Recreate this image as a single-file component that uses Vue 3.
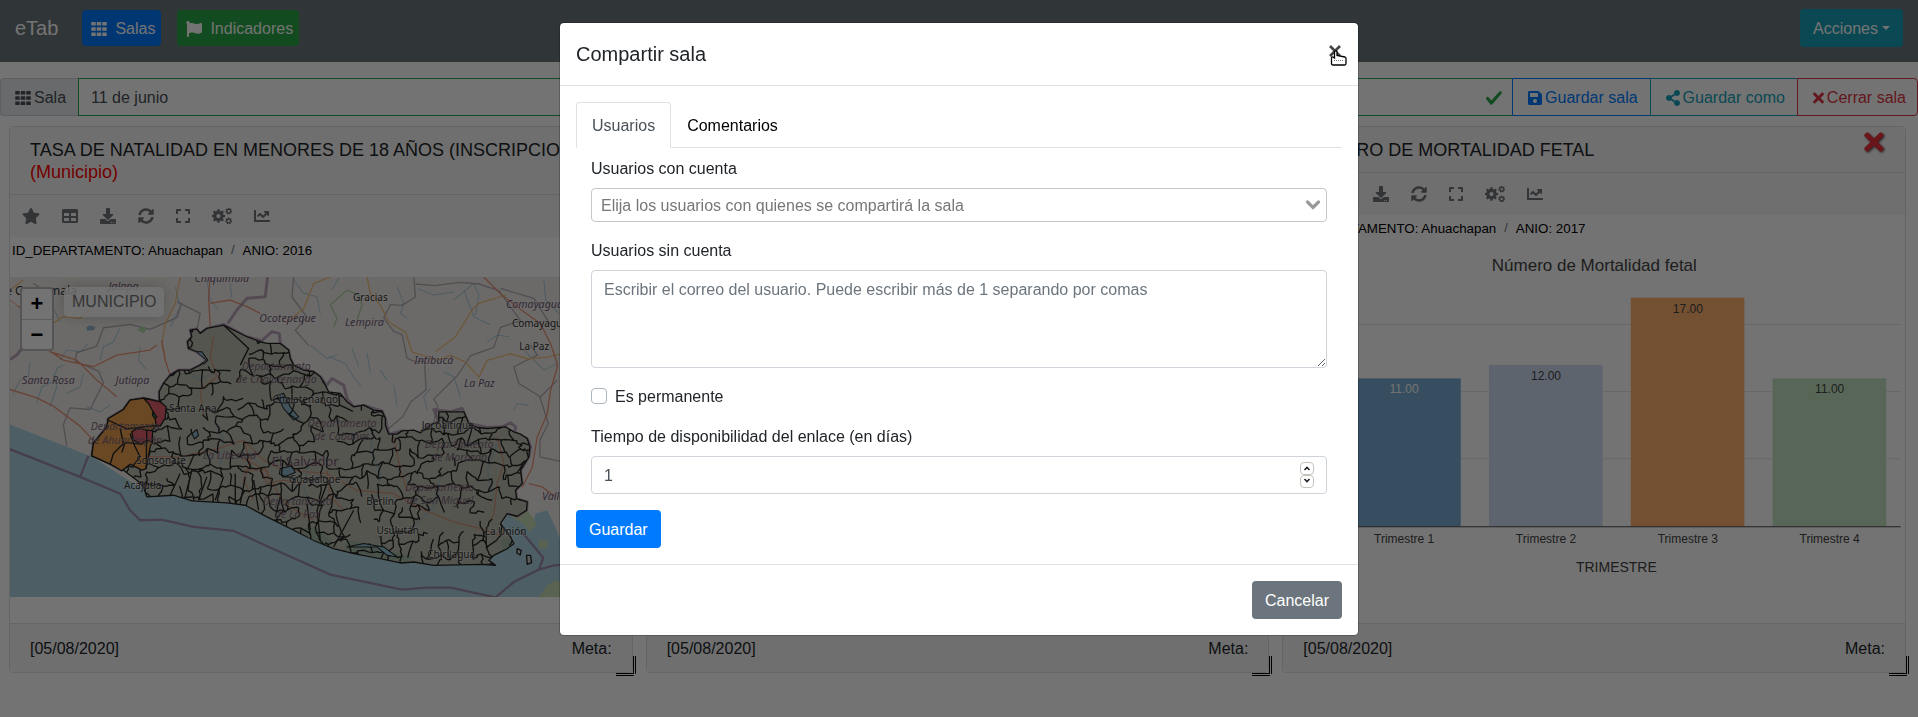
<script setup>
import { ref, h } from 'vue'

const shapes = {
  th: { w: 512, d: 'M24 32h112q16 0 16 16v80q0 16-16 16H24q-16 0-16-16V48q0-16 16-16zM200 32h112q16 0 16 16v80q0 16-16 16H200q-16 0-16-16V48q0-16 16-16zM376 32h112q16 0 16 16v80q0 16-16 16H376q-16 0-16-16V48q0-16 16-16zM24 200h112q16 0 16 16v80q0 16-16 16H24q-16 0-16-16v-80q0-16 16-16zM200 200h112q16 0 16 16v80q0 16-16 16H200q-16 0-16-16v-80q0-16 16-16zM376 200h112q16 0 16 16v80q0 16-16 16H376q-16 0-16-16v-80q0-16 16-16zM24 368h112q16 0 16 16v80q0 16-16 16H24q-16 0-16-16v-80q0-16 16-16zM200 368h112q16 0 16 16v80q0 16-16 16H200q-16 0-16-16v-80q0-16 16-16zM376 368h112q16 0 16 16v80q0 16-16 16H376q-16 0-16-16v-80q0-16 16-16z' },
  flag: { w: 512, d: 'M349.565 98.783C295.978 98.783 251.721 64 184.348 64c-24.955 0-47.309 4.384-68.045 12.013a55.947 55.947 0 0 0 3.586-23.562C118.117 24.015 94.806 1.206 66.338.048 34.345-1.254 8 24.296 8 56c0 19.026 9.497 35.825 24 45.945V488c0 13.255 10.745 24 24 24h16c13.255 0 24-10.745 24-24v-94.4c28.311-12.064 63.582-22.122 114.435-22.122 53.588 0 97.844 34.783 165.217 34.783 48.169 0 86.667-16.294 122.505-40.858C506.84 359.452 512 349.571 512 339.045v-243.1c0-23.393-24.269-38.87-45.485-29.016-34.338 15.948-76.454 31.854-116.95 31.854z' },
  save: { w: 448, d: 'M433.941 129.941l-83.882-83.882A48 48 0 0 0 316.118 32H48C21.49 32 0 53.49 0 80v352c0 26.51 21.49 48 48 48h352c26.51 0 48-21.49 48-48V163.882a48 48 0 0 0-14.059-33.941zM224 416c-35.346 0-64-28.654-64-64 0-35.346 28.654-64 64-64s64 28.654 64 64c0 35.346-28.654 64-64 64zm96-304.52V212c0 6.627-5.373 12-12 12H76c-6.627 0-12-5.373-12-12V108c0-6.627 5.373-12 12-12h228.52c3.183 0 6.235 1.264 8.485 3.515l3.48 3.48A11.996 11.996 0 0 1 320 111.48z' },
  share: { w: 448, d: 'M352 320c-22.608 0-43.387 7.819-59.79 20.895l-102.486-64.054a96.551 96.551 0 0 0 0-41.683l102.486-64.054C308.613 184.181 329.392 192 352 192c53.019 0 96-42.981 96-96S405.019 0 352 0s-96 42.981-96 96c0 7.158.79 14.13 2.276 20.841L155.79 180.895C139.387 167.819 118.608 160 96 160c-53.019 0-96 42.981-96 96s42.981 96 96 96c22.608 0 43.387-7.819 59.79-20.895l102.486 64.054A96.301 96.301 0 0 0 256 416c0 53.019 42.981 96 96 96s96-42.981 96-96-42.981-96-96-96z' },
  times: { w: 352, d: 'M242.72 256l100.07-100.07c12.28-12.28 12.28-32.19 0-44.48l-22.24-22.24c-12.28-12.28-32.19-12.28-44.48 0L176 189.28 75.93 89.21c-12.28-12.28-32.19-12.28-44.48 0L9.21 111.45c-12.28 12.28-12.28 32.19 0 44.48L109.28 256 9.21 356.07c-12.28 12.28-12.28 32.19 0 44.48l22.24 22.24c12.28 12.28 32.2 12.28 44.48 0L176 322.72l100.07 100.07c12.28 12.28 32.2 12.28 44.48 0l22.24-22.24c12.28-12.28 12.28-32.19 0-44.48L242.72 256z' },
  star: { w: 576, d: 'M259.3 17.8L194 150.2 47.9 171.5c-26.2 3.8-36.7 36.1-17.7 54.6l105.7 103-25 145.5c-4.5 26.3 23.2 46 46.4 33.7L288 439.6l130.7 68.7c23.2 12.2 50.9-7.4 46.4-33.7l-25-145.5 105.7-103c19-18.5 8.5-50.8-17.7-54.6L382 150.2 316.7 17.8c-11.7-23.6-45.6-23.9-57.4 0z' },
  table: { w: 512, d: 'M464 32H48C21.49 32 0 53.49 0 80v352c0 26.51 21.49 48 48 48h416c26.51 0 48-21.49 48-48V80c0-26.51-21.49-48-48-48zM224 416H64v-96h160v96zm0-160H64v-96h160v96zm224 160H288v-96h160v96zm0-160H288v-96h160v96z' },
  download: { w: 512, d: 'M216 0h80c13.3 0 24 10.7 24 24v168h87.7c17.8 0 26.7 21.5 14.1 34.1L269.7 378.3c-7.5 7.5-19.8 7.5-27.3 0L90.1 226.1c-12.6-12.6-3.7-34.1 14.1-34.1H192V24c0-13.3 10.7-24 24-24zm296 376v112c0 13.3-10.7 24-24 24H24c-13.3 0-24-10.7-24-24V376c0-13.3 10.7-24 24-24h146.7l49 49c20.1 20.1 52.5 20.1 72.6 0l49-49H488c13.3 0 24 10.7 24 24zm-124 88c0-11-9-20-20-20s-20 9-20 20 9 20 20 20 20-9 20-20zm64 0c0-11-9-20-20-20s-20 9-20 20 9 20 20 20 20-9 20-20z' },
  sync: { w: 512, d: 'M370.72 133.28C339.458 104.008 298.888 87.962 255.848 88c-77.458.068-144.328 53.178-162.791 126.85-1.344 5.363-6.122 9.15-11.651 9.15H24.103c-7.498 0-13.194-6.807-11.807-14.176C33.933 94.924 134.813 8 256 8c66.448 0 126.791 26.136 171.315 68.685L463.03 40.97C478.149 25.851 504 36.559 504 57.941V192c0 13.255-10.745 24-24 24H345.941c-21.382 0-32.09-25.851-16.971-40.971l41.75-41.749zM32 296h134.059c21.382 0 32.09 25.851 16.971 40.971l-41.75 41.75c31.262 29.273 71.835 45.319 114.876 45.28 77.418-.07 144.315-53.144 162.787-126.849 1.344-5.363 6.122-9.15 11.651-9.15h57.304c7.498 0 13.194 6.807 11.807 14.176C478.067 417.076 377.187 504 256 504c-66.448 0-126.791-26.136-171.315-68.685L48.97 471.03C33.851 486.149 8 475.441 8 454.059V320c0-13.255 10.745-24 24-24z' },
  expand: { w: 448, d: 'M0 180V56c0-13.3 10.7-24 24-24h124c6.6 0 12 5.4 12 12v40c0 6.6-5.4 12-12 12H64v84c0 6.6-5.4 12-12 12H12c-6.6 0-12-5.4-12-12zM288 44v40c0 6.6 5.4 12 12 12h84v84c0 6.6 5.4 12 12 12h40c6.6 0 12-5.4 12-12V56c0-13.3-10.7-24-24-24H300c-6.6 0-12 5.4-12 12zm148 276h-40c-6.6 0-12 5.4-12 12v84h-84c-6.6 0-12 5.4-12 12v40c0 6.6 5.4 12 12 12h124c13.3 0 24-10.7 24-24V332c0-6.6-5.4-12-12-12zM160 468v-40c0-6.6-5.4-12-12-12H64v-84c0-6.6-5.4-12-12-12H12c-6.6 0-12 5.4-12 12v124c0 13.3 10.7 24 24 24h124c6.6 0 12-5.4 12-12z' },
  cogs: { w: 640, d: gear(206, 256, 216, 166, 68, 8) + gear(534, 100, 112, 84, 38, 7) + gear(534, 412, 112, 84, 38, 7) },
  chart: { w: 512, d: 'M496 384H64V80c0-8.84-7.16-16-16-16H16C7.16 64 0 71.16 0 80v336c0 17.67 14.33 32 32 32h464c8.84 0 16-7.16 16-16v-32c0-8.84-7.16-16-16-16zM464 96H345.94c-21.38 0-32.09 25.85-16.97 40.97l32.4 32.4L288 242.75l-73.37-73.37c-12.5-12.5-32.76-12.5-45.25 0l-68.69 68.69c-6.25 6.25-6.25 16.38 0 22.63l22.62 22.62c6.25 6.25 16.38 6.25 22.63 0L192 237.25l73.37 73.37c12.5 12.5 32.76 12.5 45.25 0l96-96 32.4 32.4c15.12 15.12 40.97 4.41 40.97-16.97V112c.01-8.84-7.15-16-15.99-16z' },
}

function gear(cx, cy, outer, inner, hole, teeth) {
  const pts = []
  const step = (Math.PI * 2) / teeth
  for (let i = 0; i < teeth; i++) {
    const a = i * step - Math.PI / 2
    for (const [f, r] of [[-0.32, inner], [-0.2, outer], [0.2, outer], [0.32, inner]]) {
      pts.push(`${(cx + Math.cos(a + f * step) * r).toFixed(1)} ${(cy + Math.sin(a + f * step) * r).toFixed(1)}`)
    }
  }
  return `M${pts.join('L')}zM${cx - hole} ${cy}a${hole} ${hole} 0 1 0 ${hole * 2} 0a${hole} ${hole} 0 1 0 ${-hole * 2} 0z`
}

const Icon = (props) =>
  h('svg', {
    viewBox: `0 0 ${shapes[props.name].w} 512`,
    width: Math.round(shapes[props.name].w / 32),
    height: 16,
    fill: 'currentColor',
    'fill-rule': 'evenodd',
    'aria-hidden': 'true',
  }, [h('path', { d: shapes[props.name].d })])
Icon.props = ['name']

const tools = [
  ['star', 'Favorito'], ['table', 'Tabla'], ['download', 'Descargar'], ['sync', 'Recargar'],
  ['expand', 'Pantalla completa'], ['cogs', 'Opciones'], ['chart', 'Tendencia'],
]

const cards = [
  { kind: 'map', title: 'TASA DE NATALIDAD EN MENORES DE 18 AÑOS (INSCRIPCIONES)', level: '(Municipio)', year: '2016' },
  { kind: 'blank', title: '', year: '' },
  { kind: 'bars', title: 'NÚMERO DE MORTALIDAD FETAL', year: '2017' },
]

const bars = [
  { label: 'Trimestre 1', value: 11, fill: '#79add2', text: '#ffffff' },
  { label: 'Trimestre 2', value: 12, fill: '#ceddf1', text: '#444444' },
  { label: 'Trimestre 3', value: 17, fill: '#ffb26e', text: '#444444' },
  { label: 'Trimestre 4', value: 11, fill: '#c3e3c0', text: '#444444' },
]
const yOf = (v) => 249 - v * 13.43

/* Deterministic mesh of municipal limits, clipped to the country outline. */
function mesh() {
  let seed = 4211
  const rnd = () => ((seed = (seed * 16807) % 2147483647) / 2147483647)
  const W = 30
  const H = 34
  const cols = 47
  const rows = 24
  const node = []
  for (let r = 0; r < rows; r++) {
    node.push([])
    for (let c = 0; c < cols; c++) {
      node[r].push([c * W + (rnd() - 0.5) * 26, 20 + r * H + (rnd() - 0.5) * 30])
    }
  }
  const open = [[430, 110, 90, 70], [490, 235, 60, 40], [600, 330, 38, 40], [1100, 625, 75, 50], [370, 270, 50, 30], [840, 320, 40, 35], [850, 650, 50, 40], [745, 390, 45, 30], [330, 320, 40, 40], [1230, 600, 40, 35]]
  const hidden = (x, y) => open.some(([a, b, p, q]) => ((x - a) / p) ** 2 + ((y - b) / q) ** 2 < 1)
  let d = ''
  const edge = (a, b) => {
    const at = (t, j) => [a[0] + (b[0] - a[0]) * t + (rnd() - 0.5) * j, a[1] + (b[1] - a[1]) * t + (rnd() - 0.5) * j]
    const p = at(0.33, 11)
    const q = at(0.66, 11)
    if (!hidden(p[0], p[1])) d += `M${[a, p, q, b].map((n) => n.map(Math.round).join(' ')).join('L')}`
  }
  for (let r = 0; r < rows - 1; r++) {
    for (let c = 0; c < cols - 1; c++) {
      const coast = node[r][c][1] > 430 + node[r][c][0] * 0.12
      if (rnd() > (coast ? 0.42 : 0.16)) edge(node[r][c], node[r][c + 1])
      if ((r + c) % 2 || (coast && rnd() > 0.5)) edge(node[r][c], node[r + 1][c])
    }
  }
  return d
}
const limits = mesh()

const country = 'M35 437L40 400 60 375 80 350 85 325 130 298 150 270 190 264 205 266 238 275 237 245 250 220 270 195 295 180 330 180 360 165 380 150 350 125 325 115 322 95 335 80 330 60 350 57 360 70 380 55 430 45 500 80 540 95 560 100 600 100 625 120 630 145 640 165 670 180 700 185 720 200 735 225 745 245 780 250 800 275 820 290 850 285 880 300 905 303 915 325 915 345 925 372 950 372 965 362 1000 360 1020 368 1050 345 1075 335 1075 305 1150 305 1165 340 1190 352 1220 355 1275 350 1300 365 1320 372 1340 385 1348 410 1345 440 1320 480 1325 520 1305 540 1308 565 1340 575 1338 600 1310 618 1280 610 1260 640 1290 680 1300 700 1280 715 1240 735 1225 750 1245 765 1200 762 1060 765 1000 755 960 758 900 745 820 730 760 715 700 690 640 660 560 620 495 585 440 578 335 572 280 555 200 560 190 530 170 510 130 480 90 462z'
const border = 'M-210 148L-190 135-170 110-130 85-100 75-90 40M35 437L40 400 60 375 80 350 85 325 130 298 150 270 190 264 238 275 237 245 250 220 270 195 295 180 330 180 360 165 380 150 350 125 325 115 322 95 335 80 330 60 350 57 360 70 380 55 430 43 500 80 545 92 575 65 597 70 600 100 625 120 630 145 640 165 670 180 700 185 720 200 740 225 755 205 790 225 800 265 820 290 850 285 905 303 915 325 925 372 965 362 1020 368 1040 345 1075 335 1060 298 1110 305 1145 295 1165 340 1220 352 1265 350 1290 338 1305 350 1303 368 1340 385 1350 410 1345 440 1320 480 1325 520 1305 540 1308 565 1340 575 1338 600 1310 618 1280 610M443 40L470 0 500-35 555-40 562-99'
const maritime = 'M-210 417L0 500 120 550 150 600 180 630 245 628 340 650 460 662 750 793 965 838 1040 832 1110 832 1245 861 1300 815 1375 778 1388 742 1320 660M25 437L0 500M1375 778L1420 765 1500 758'

const labels = [
  ['Santa Rosa', -95, 221, 'i'], ['Jutiapa', 157, 223, 'i'], ['Jalapa', 130, -60, 'i'], ['Chiquimula', 425, -84, 'i'],
  ['Ocotepeque', 622, 36, 'i'], ['Lempira', 852, 48, 'i'], ['Gracias', 870, -27, 'n'], ['Intibucá', 1060, 161, 'i'],
  ['La Paz', 1197, 230, 'i'], ['Comayagua', 1362, -7, 'i'], ['Comayagua', 1378, 51, 'n'], ['La Paz', 1361, 121, 'n'],
  ['Departamento', 135, 361, 'd'], ['de Ahuachapán', 135, 400, 'd'], ['Departamento', 588, 180, 'd'], ['de Chalatenango', 588, 219, 'd'],
  ['Departamento', 785, 350, 'd'], ['de Cabañas', 785, 389, 'd'], ['Departamento', 1136, 412, 'd'], ['de Morazán', 1136, 451, 'd'],
  ['Departamento', 1078, 543, 'd'], ['de San Miguel', 1078, 582, 'd'], ['Departamento', 651, 583, 'd'], ['de La Paz', 651, 623, 'd'],
  ['La Libertad', 448, 447, 'd'], ['Valle', 1418, 570, 'i'], ['El Salvador', 675, 466, 'c'], ['Santa Ana', 338, 306, 'n'],
  ['Sonsonate', 243, 460, 'n'], ['Acajutla', 188, 537, 'n'], ['Chalatenango', 675, 280, 'n'], ['Jocoaitique', 1102, 358, 'n'],
  ['Guadalupe', 703, 518, 'n'], ['Berlín', 899, 585, 'n'], ['Usulután', 952, 672, 'n'], ['Chirilagua', 1112, 742, 'n'], ['La Unión', 1275, 675, 'n'],
]

const roomName = ref('11 de junio')
const account = ref('')
const mails = ref('')
const permanent = ref(false)
const days = ref(1)
</script>

<template>
  <div class="page">
    <nav class="navbar">
      <a class="brand" href="#">eTab</a>
      <button class="nav-btn blue" type="button"><Icon name="th" />Salas</button>
      <button class="nav-btn green" type="button"><Icon name="flag" />Indicadores</button>
      <button class="btn teal" type="button">Acciones<span class="caret"></span></button>
    </nav>

    <div class="toolbar">
      <label class="prepend" for="room"><Icon name="th" />Sala</label>
      <div class="room">
        <input id="room" v-model="roomName" type="text">
        <svg class="ok" viewBox="0 0 8 8" width="18" height="18" aria-hidden="true"><path fill="#28a745" d="M2.3 6.73L.6 4.53c-.4-1.04.46-1.4 1.1-.8l1.1 1.4 3.4-3.8c.6-.63 1.6-.27 1.2.7l-4 4.6c-.43.5-.8.4-1.1.1z" /></svg>
      </div>
      <button class="tb-btn save" type="button"><Icon name="save" />Guardar sala</button>
      <button class="tb-btn copy" type="button"><Icon name="share" />Guardar como</button>
      <button class="tb-btn close-room" type="button"><Icon name="times" />Cerrar sala</button>
    </div>

    <main class="grid">
      <section v-for="card in cards" :key="card.kind" class="card">
        <header class="card-head">
          <h2>{{ card.title }} <span v-if="card.level" class="level">{{ card.level }}</span></h2>
          <button v-if="card.kind === 'bars'" class="remove" type="button" aria-label="Quitar"><Icon name="times" /></button>
        </header>
        <div class="tools">
          <button v-for="[name, text] in tools" :key="name" type="button" :aria-label="text"><Icon :name="name" /></button>
        </div>
        <div v-if="card.year" class="crumbs">
          <button type="button">ID_DEPARTAMENTO: Ahuachapan</button><span>/</span><button type="button">ANIO: {{ card.year }}</button>
        </div>

        <div v-if="card.kind === 'map'" class="map">
          <svg class="map-art" viewBox="-210 -99 1863 960" preserveAspectRatio="xMinYMin slice" role="img" aria-label="Mapa">
            <defs><clipPath id="country"><path :d="country" /></clipPath></defs>
            <rect x="-210" y="-99" width="1863" height="960" fill="#f0ece7" />
            <path fill="#aad3df" d="M-210 343L-40 410 35 440 200 545 500 560 900 700 1240 700 1280 610 1320 630 1350 665 1365 610 1400 600 1420 640 1440 690 1653 690V861H-210z" />
            <path fill="#c8dcb4" d="M1290 620L1340 600 1370 640 1350 665 1320 635zM1375 690l25 0 0 25-25 0zM1375 861L1400 825 1425 810 1500 840V861z" />
            <g fill="none" stroke="#a9ccda" stroke-width="3" stroke-linejoin="round">
              <path d="M-200 250l20-40 25-10 5-45M-130 280l15-50 35-15 10-40 20-10M-90 290l20-60-10-40M-40 250l40-20 10-40M-170 30l30-25-5-40 20-40M-60 150l20-30 40 5 25-25M60 150l10-40 30-15 20-40M200 180l-25-30 5-40M270 50l30-60-15-60M-120-20l40 15 20 40M20 290l40 15 30-20M380-90l10 60 25 30M450-80l5 45M640-90l30 40 40 10 10 50M755-60l20-35M690 105l50 40 30-10M745 140l50 20 30 50 20 20M815 115l20 55M860 130l10 60M950-70l20 50-10 30 20 15M1010-65l50 20 60-10M1120-30l60-50 15 35-10 60M1150-60l30 80 50 25M1220 95l30-20 35 5M1140 260l-20-60-30-15M1300 300l10-20 35 5M1390-90l5 60 40 40M1330 120l60 60 40-20M900 180l20 30M940 225l10 60M1040 300l-10-40 20-25" />
            </g>
            <g fill="none" stroke="#b3abb2" stroke-width="4" stroke-linejoin="round">
              <path d="M-40 408l-10-65 20-50 60 5 40-80-15-35-70-30 5-25 60-20 20-55 80-10 60 15 80-35 15-45M290-25l70 35-10 50M-80-30l-60-50M640-99l-5 60 45 60-35 40 40 45M1000-99l5 60-40 25-35-2-20 40 30 40 25 10 15 70 20 10 32 0 5 85-45 35-25 45-70 60M1005-78l60 5 70-10 60 5 60 20 65 90-60 20-20 60-70 25-40 60-70 70 12 20-15 60M1260-65l100 30 50 80M1350 105l20 30-70 35 15 50 65 40 50-50M1378 260l25 80-25 50 0 50 70 15" />
            </g>
            <path fill="none" stroke="#b0cfa5" stroke-width="4" d="M750-15l50-45 35 15 10 30-15 45M750-15l20 40-10 25" />
            <g fill="none" stroke="#eec080" stroke-width="4" stroke-linejoin="round">
              <path d="M300-99l-15 80-30 60-10 60 10 40M-210-60l40-30M-130 70l80-50 50 5 40-35M750-99l-50 20-30 75-50 40M860-99l10 50 30 35 25 50 50 30 20 60 50 15 25 10 40-15 45 20 40 45 25-50 70-20 50 15 60-5 70-15M1065 125l60-45 50-80 20-20 80-25" />
            </g>
            <g fill="none" stroke="#e69478" stroke-width="4" stroke-linejoin="round">
              <path d="M-210-30l40 30 60 110 60 40 90 20 70-35 100-15 20-15M-90 125l80 25 60 60 60 50M-210 238l80 25 50 25 80 60 60 65M245 90l10 60 30 90 25 50 30 50 30 50M390-99l-5 60 5 90 10 40-15 50 10 60-100 60M390-20l60-10 50 20 40 20M1210-99l50 50 50 40 70 50 30 60 20 60 0 10-20 70-10 70-30 70-15 90-30 60M1345 520l40 10 40 30" />
            </g>
            <path fill="#fff" fill-opacity=".4" d="M-210-50l30-20 60 10 30 30-60 20-60-5z" />
            <path fill="#8eb6cb" d="M18 52l10-6 18 4-4 10-20 2z" />
            <path fill="#b2d6a8" d="M172 60l14-12 14 8-10 14z" />
            <path :d="border" fill="none" stroke="#a58ba8" stroke-width="9" stroke-linejoin="round" stroke-opacity=".75" />
            <path :d="maritime" fill="none" stroke="#9c8da6" stroke-width="7" />
            <path :d="country" fill="#bdbdb1" stroke="#222" stroke-width="4" stroke-linejoin="round" />
            <g clip-path="url(#country)">
              <g fill="none" stroke="#93b3bd" stroke-width="3"><path d="M330 190l25 20 60-30M400 330l30 60-10 80M690 440l-20 90 25 70M880 360l-10 60 30 70-10 60M1080 500l-20 90-60 60M1250 400l-30 80 20 90M560 300l40-40 30 60 40 10" /></g>
              <path fill="#8fb49a" fill-opacity=".6" d="M660 655l50-5 50 50-20 10-60-30zM800 690l60 10 50 20 90 20-20 15-100-15-90-20zM1260 690l20-10 20 20-30 20z" />
              <path fill="none" stroke="#cf9478" stroke-width="4" d="M200 440l90 0 110-20 90-30 60 60 50 25 80 10 60 5 90 50 110 10 80 45 100 40 80 20 60 20M490 390l20 60 -20 60 30 60M400 80l-10 60 20 60-50 40 10 80M740 480l10 80 40 40M550 470l60 110 90 50M940 380l20 100 20 60M1250 380l20 80-20 60-10 90-30 60M480 440l60 30 20 50 50-10 60 10M490 480h70l10 30" />
              <path fill="#8eb6cb" stroke="#222" stroke-width="3" d="M350 125l15 0 18 25-12 12-25-20zM335 370l15-12 5 18-12 10zM600 475l35-8 10 20-30 12-18-8zM590 255l20-5 20 40 25 30-15 10-30-35z" />
              <path :d="limits" fill="none" stroke="#222" stroke-width="4" stroke-linejoin="round" />
              <path fill="none" stroke="#222" stroke-width="4" d="M300 490l-30 65M335 480l-20 80M380 500l-25 70M430 500l-25 70M465 490l0 90M495 500l-15 80M520 510l15 90M600 560l-15 60M680 580l10 80M740 520l-30 80 10 90M820 600l-60 110M430 45l75 70-25 50" />
            </g>
            <g stroke="#222" stroke-width="4" stroke-linejoin="round">
              <path fill="#ec9f50" d="M35 437L40 400 60 375 80 350 85 325 130 298 150 270 190 264 205 270 225 310 230 345 215 360 218 390 210 410 198 475 185 480 150 462 125 482 90 462z" />
              <path fill="#e0606c" d="M190 264L240 275 258 290 255 325 240 348 228 345 222 310 205 280zM155 365L170 355 218 362 215 395 198 390 185 402 160 390z" />
              <path fill="none" d="M80 328l60 28 90-10M120 355l10 45-30 30-10 32M150 370l10 30 20 40-20 25M185 402l-50-5-10 30M200 360l-2 115" />
              <path fill="#3fa060" d="M218 305l12 15-5 5-8-10z" />
              <path fill="#ccc" d="M1310 715l12 5-3 14-10-6zM1338 735l12 0 3 22-13 5z" />
              <path fill="#8fc3d2" stroke-width="3" d="M800 710l50-10 60 10 40 30-30-5-30-25z" />
            </g>
            <text v-for="([text, x, y, kind], i) in labels" :key="i" :x="x" :y="y" :class="['place', kind]">{{ text }}</text>
            <text x="-128" y="-45" class="place city">de Guatemala</text>
          </svg>
          <div class="zoom">
            <button type="button">+</button>
            <button type="button">−</button>
          </div>
          <div class="map-title">MUNICIPIO</div>
        </div>

        <svg v-else-if="card.kind === 'bars'" class="chart" viewBox="0 0 621 340" preserveAspectRatio="xMidYMin meet" role="img" aria-label="Número de Mortalidad fetal">
          <text x="311" y="-6" class="chart-title">Número de Mortalidad fetal</text>
          <path v-for="g in [5, 10, 15]" :key="g" :d="`M50 ${Math.round(yOf(g)) - 0.5}H617`" stroke="#e6e6e6" />
          <g v-for="(bar, i) in bars" :key="bar.label">
            <rect :x="64 + i * 141.7" :y="yOf(bar.value)" width="113.5" :height="249 - yOf(bar.value)" :fill="bar.fill" />
            <text :x="121 + i * 141.7" :y="yOf(bar.value) + 15" :fill="bar.text" class="tick">{{ bar.value.toFixed(2) }}</text>
            <text :x="121 + i * 141.7" y="266" fill="#444" class="tick">{{ bar.label }}</text>
          </g>
          <path d="M50 249.5H617" stroke="#444" />
          <text x="333" y="295" class="axis">TRIMESTRE</text>
        </svg>

        <footer class="card-foot"><span>[05/08/2020]</span><span>Meta:</span></footer>
        <svg class="grip" viewBox="0 0 20 20" width="20" height="20" aria-hidden="true"><path d="M17.5 0v18M19.5 0v18M0 17.5h18M0 19.5h18" stroke="#000" fill="none" /></svg>
      </section>
    </main>

    <div class="backdrop"></div>
    <div class="modal-wrap">
      <div class="modal" role="dialog" aria-modal="true" aria-labelledby="modal-title">
        <header class="modal-head">
          <h1 id="modal-title">Compartir sala</h1>
          <button class="close" type="button" aria-label="Cerrar">
            <svg viewBox="0 0 20 24" width="20" height="24">
              <path d="M4 4l10 10M14 4L4 14" stroke="#444" stroke-width="2.600" fill="none" />
              <path d="M8.500 9.500q1.500-1.200 2.500.3v3.700l8 1.500q1.500.6 1 2.500v4q0 1.500-1.500 1.500H7q-1.500 0-1.500-1.500v-5.500q0-1.500 1.500-1l1.500 1z" fill="#fff" stroke="#000" stroke-width="1.300" />
              <path d="M8 18.500h10" stroke="#777" stroke-dasharray="1 1" />
            </svg>
          </button>
        </header>
        <form class="modal-body" @submit.prevent>
          <div class="tabs" role="tablist">
            <button class="tab active" type="button" role="tab" aria-selected="true">Usuarios</button>
            <button class="tab" type="button" role="tab" aria-selected="false">Comentarios</button>
          </div>
          <div class="pane">
            <div class="field">
              <label for="account">Usuarios con cuenta</label>
              <div class="select-box">
                <select id="account" v-model="account"><option value="">Elija los usuarios con quienes se compartirá la sala</option></select>
                <svg viewBox="0 0 16 12" width="16" height="12" aria-hidden="true"><path d="M2.500 3L8 8.500 13.500 3" fill="none" stroke="#999" stroke-width="3.200" stroke-linecap="round" /></svg>
              </div>
            </div>
            <div class="field">
              <label for="mails">Usuarios sin cuenta</label>
              <textarea id="mails" v-model="mails" placeholder="Escribir el correo del usuario. Puede escribir más de 1 separando por comas"></textarea>
            </div>
            <div class="field check">
              <input id="permanent" v-model="permanent" type="checkbox"><label for="permanent">Es permanente</label>
            </div>
            <div class="field last">
              <label for="days">Tiempo de disponibilidad del enlace (en días)</label>
              <div class="number">
                <input id="days" v-model="days" type="number" min="1">
                <div class="spin">
                  <button type="button" aria-label="Más" @click="days++"><svg viewBox="0 0 12 11" width="12" height="11"><path d="M3.500 7L6 4.500 8.500 7" /></svg></button>
                  <button type="button" aria-label="Menos" @click="days--"><svg viewBox="0 0 12 11" width="12" height="11"><path d="M3.500 3L6 5.500 8.500 3" /></svg></button>
                </div>
              </div>
            </div>
          </div>
          <button class="btn primary" type="submit">Guardar</button>
        </form>
        <footer class="modal-foot"><button class="btn secondary" type="button">Cancelar</button></footer>
      </div>
    </div>
  </div>
</template>

<style>
body {
  margin: 0;
  background: #fff;
}
</style>

<style scoped>
.page {
  color: #212529;
  font: 16px/24px "Liberation Sans", Arial, sans-serif;
}
.page *,
.page *::before {
  box-sizing: border-box;
}
button,
input,
select,
textarea {
  font-family: inherit;
  margin: 0;
}
.navbar {
  display: flex;
  align-items: center;
  gap: 16px;
  padding: 9px 15px 15px;
  background: #6c757d;
}
.brand {
  margin-right: 8px;
  color: #fff;
  font-size: 20px;
  text-decoration: none;
}
.nav-btn {
  display: flex;
  align-items: center;
  gap: 8px;
  height: 36px;
  padding: 1px 6px 0 9px;
  border: 0;
  border-radius: 4px;
  color: #fff;
  font-size: 16px;
}
.blue,
.primary {
  background: #007bff;
}
.green {
  background: #28a745;
}
.btn {
  padding: 8px 13px 6px;
  border: 0;
  border-radius: 4px;
  color: #fff;
  font-size: 16px;
  line-height: 24px;
}
.teal {
  margin-left: auto;
  background: #17a2b8;
}
.secondary {
  background: #6c757d;
}
.caret {
  display: inline-block;
  margin-left: 4px;
  vertical-align: 4px;
  border: 4px solid transparent;
  border-top-color: #fff;
  border-bottom: 0;
}
.toolbar {
  display: flex;
  height: 38px;
  margin-top: 16px;
}
.prepend {
  display: flex;
  align-items: center;
  gap: 3px;
  padding: 1px 12px 0 14px;
  border: 1px solid #ced4da;
  border-right: 0;
  border-radius: 4px 0 0 4px;
  background: #e9ecef;
  color: #495057;
}
.room {
  display: flex;
  flex: 1;
  align-items: center;
  padding: 1px 9px 0 0;
  border: 1px solid #28a745;
  border-right: 0;
}
.room input {
  flex: 1;
  min-width: 0;
  padding: 0 12px;
  border: 0;
  outline: 0;
  background: transparent;
  color: #495057;
  font-size: 16px;
}
.tb-btn {
  display: flex;
  align-items: center;
  gap: 3px;
  padding: 1px 12px 0 15px;
  border: 1px solid currentColor;
  border-right-width: 0;
  background: transparent;
  font-size: 16px;
}
.save {
  color: #007bff;
}
.copy {
  color: #17a2b8;
}
.close-room {
  padding-right: 11px;
  border-right-width: 1px;
  border-radius: 0 4px 4px 0;
  color: #dc3545;
}
.grid {
  display: grid;
  grid-template-columns: repeat(3, minmax(0, 1fr));
  gap: 13px;
  padding: 10px 12px 44px 9px;
}
.card {
  position: relative;
  display: flex;
  flex-direction: column;
  border: 1px solid #dfdfdf;
  border-radius: 4px;
}
.card-head {
  padding: 12px 20px 11px;
  border-bottom: 1px solid #dfdfdf;
  background: #f7f7f7;
}
.card-head h2 {
  margin: 0;
  font-size: 18px;
  font-weight: 400;
  line-height: 22px;
}
.level {
  display: block;
  color: #f00;
}
.remove {
  position: absolute;
  top: 1px;
  right: 20px;
  padding: 0;
  border: 0;
  background: none;
  color: #e8303a;
  line-height: 0;
}
.remove svg {
  width: 22px;
  height: 28px;
  filter: drop-shadow(1px 1px 1px #555);
}
.tools {
  display: flex;
  align-items: center;
  gap: 22px;
  height: 42px;
  padding-left: 12px;
  background: #f7f7f7;
}
.tools button {
  padding: 0;
  border: 0;
  background: none;
  color: #6f7376;
  line-height: 0;
}
.crumbs {
  display: flex;
  align-items: center;
  gap: 8px;
  height: 26px;
  padding-left: 2px;
  color: #6c757d;
  font-size: 13px;
}
.crumbs button {
  padding: 0;
  border: 0;
  background: none;
  color: #000;
}
.map {
  position: relative;
  height: 320px;
  margin: 14px 0 26px;
  overflow: hidden;
}
.map-art {
  display: block;
  width: 100%;
  height: 100%;
}
.place {
  fill: #333;
  font: 30px "Noto Sans", sans-serif;
  text-anchor: middle;
  paint-order: stroke;
  stroke: #fff;
  stroke-opacity: 0.3;
  stroke-width: 5px;
}
.place.i,
.place.d {
  fill: #6f5573;
  font-size: 32px;
  font-style: italic;
}
.place.d {
  fill: #7b6675;
  stroke-opacity: 0;
}
.place.c {
  fill: #75566f;
  font-size: 39px;
  stroke-opacity: 0;
}
.place.city {
  font-size: 36px;
}
.zoom {
  position: absolute;
  top: 10px;
  left: 10px;
  overflow: hidden;
  border: 2px solid #bbb;
  border-radius: 4px;
}
.zoom button {
  display: block;
  width: 30px;
  height: 30px;
  padding: 0;
  border: 0;
  background: #fff;
  color: #000;
  font-size: 22px;
  font-weight: 700;
  line-height: 30px;
}
.zoom button + button {
  border-top: 1px solid #ccc;
}
.map-title {
  position: absolute;
  top: 10px;
  left: 54px;
  padding: 6px 8px;
  border-radius: 5px;
  background: rgba(255, 255, 255, 0.8);
  box-shadow: 0 0 15px rgba(0, 0, 0, 0.2);
  color: #777;
  line-height: 18px;
}
.chart {
  display: block;
  width: 100%;
  margin-top: 36px;
  overflow: visible;
}
.chart text {
  text-anchor: middle;
}
.chart-title {
  fill: #444;
  font-size: 17px;
}
.tick {
  font-size: 12px;
}
.axis {
  fill: #444;
  font-size: 14px;
}
.card-foot {
  display: flex;
  justify-content: space-between;
  margin-top: auto;
  padding: 13px 20px 11px;
  border-top: 1px solid #dfdfdf;
  background: #f7f7f7;
}
.grip {
  position: absolute;
  right: -4px;
  bottom: -4px;
}
.backdrop {
  position: fixed;
  inset: 0;
  z-index: 1;
  background: rgba(0, 0, 0, 0.55);
}
.modal-wrap {
  position: fixed;
  inset: 0;
  z-index: 2;
  display: flex;
  align-items: flex-start;
  justify-content: center;
  padding-top: 22px;
}
.modal {
  width: 100%;
  max-width: 800px;
  border: 1px solid rgba(0, 0, 0, 0.2);
  border-radius: 5px;
  background: #fff;
  background-clip: padding-box;
}
.modal-head {
  display: flex;
  align-items: flex-start;
  justify-content: space-between;
  padding: 16px;
  border-bottom: 1px solid #dee2e6;
}
.modal-head h1 {
  margin: 0;
  font-size: 20px;
  font-weight: 400;
  line-height: 30px;
}
.close {
  height: 30px;
  margin-right: -4px;
  padding: 0;
  border: 0;
  background: none;
}
.close svg {
  display: block;
  overflow: visible;
}
.modal-body {
  padding: 16px;
}
.tabs {
  display: flex;
  height: 46px;
  border-bottom: 1px solid #dee2e6;
}
.tab {
  height: 46px;
  padding: 2px 15px 0;
  border: 1px solid transparent;
  border-radius: 4px 4px 0 0;
  background: none;
  color: #000;
  font-size: 16px;
}
.tab.active {
  border-color: #dee2e6 #dee2e6 #fff;
  background: #fff;
  color: #495057;
}
.pane {
  padding: 9px 15px 0;
}
.field {
  margin-bottom: 17px;
}
.field.check,
.field.last {
  margin-bottom: 16px;
}
.field label {
  display: block;
  margin-bottom: 7px;
}
.select-box {
  position: relative;
}
.select-box select {
  display: block;
  width: 100%;
  height: 34px;
  padding: 0 9px;
  border: 1px solid #c6c6c6;
  border-radius: 4px;
  appearance: none;
  background: #fff;
  color: #777;
  font-size: 16px;
}
.select-box svg {
  position: absolute;
  top: 11px;
  right: 6px;
  pointer-events: none;
}
textarea {
  display: block;
  width: 100%;
  height: 98px;
  padding: 7px 12px;
  border: 1px solid #ced4da;
  border-radius: 4px;
  color: #495057;
  font-size: 16px;
  line-height: 24px;
}
textarea::placeholder {
  color: #6c757d;
}
.check {
  display: flex;
  align-items: flex-start;
  gap: 8px;
}
.field.check label {
  margin: 0;
}
.check input {
  width: 16px;
  height: 16px;
  margin-top: 3px;
  border: 1px solid #adb5bd;
  border-radius: 4px;
  appearance: none;
  background: #fff;
}
.check input:checked {
  background: #007bff;
}
.number {
  display: flex;
  align-items: center;
  height: 38px;
  padding: 0 12px;
  border: 1px solid #ced4da;
  border-radius: 4px;
}
.number input {
  flex: 1;
  min-width: 0;
  padding: 2px 0 0;
  border: 0;
  outline: 0;
  appearance: textfield;
  color: #495057;
  font-size: 16px;
}
.number input::-webkit-inner-spin-button {
  display: none;
}
.spin button {
  display: block;
  width: 14px;
  height: 13px;
  padding: 0;
  border: 1px solid #c4c4bd;
  border-radius: 4px;
  background: #fff;
}
.spin svg {
  display: block;
  fill: none;
  stroke: #222;
  stroke-width: 1.6;
}
.modal-foot {
  display: flex;
  justify-content: flex-end;
  padding: 16px;
  border-top: 1px solid #dee2e6;
}
</style>
